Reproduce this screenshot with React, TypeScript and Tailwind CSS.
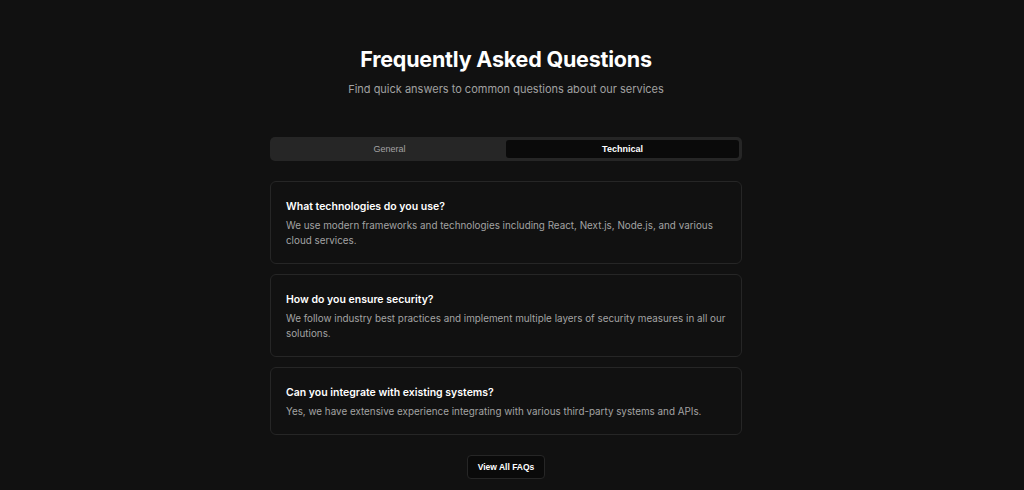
import { useState } from 'react';

const faqs = {
  general: [
    {
      q: 'What services do you offer?',
      a: 'We offer web development, mobile apps, design and consulting services for businesses of all sizes.',
    },
  ],
  technical: [
    {
      q: 'What technologies do you use?',
      a: 'We use modern frameworks and technologies including React, Next.js, Node.js, and various cloud services.',
    },
    {
      q: 'How do you ensure security?',
      a: 'We follow industry best practices and implement multiple layers of security measures in all our solutions.',
    },
    {
      q: 'Can you integrate with existing systems?',
      a: 'Yes, we have extensive experience integrating with various third-party systems and APIs.',
    },
  ],
};

export default function App() {
  const [tab, setTab] = useState<'general' | 'technical'>('technical');

  return (
    <div className="min-h-screen bg-[#111111] pr-[12px] text-white font-['Inter',sans-serif]">
      <section className="mx-auto w-[472px] pt-[45px] pb-[12px]">
        {/* Header */}
        <div className="text-center">
          <h1 className="text-[21.5px] leading-[28px] font-bold tracking-[-0.2px]">Frequently Asked Questions</h1>
          <p className="mt-[8px] text-[11px] leading-[16px] text-[#a1a1a1]">
            Find quick answers to common questions about our services
          </p>
        </div>

        {/* Tabs */}
        <div className="mt-[40px] grid grid-cols-2 rounded-[5px] bg-[#262626] p-[3px] font-['Liberation_Sans',Arial,sans-serif] text-[9px]">
          <button
            onClick={() => setTab('general')}
            className={
              tab === 'general'
                ? 'h-[18px] rounded-[3px] bg-[#0a0a0a] pt-[1px] font-bold text-white'
                : 'h-[18px] rounded-[3px] pt-[1px] text-[#a3a3a3]'
            }
          >
            General
          </button>
          <button
            onClick={() => setTab('technical')}
            className={
              tab === 'technical'
                ? 'h-[18px] rounded-[3px] bg-[#0a0a0a] pt-[1px] font-bold text-white'
                : 'h-[18px] rounded-[3px] pt-[1px] text-[#a3a3a3]'
            }
          >
            Technical
          </button>
        </div>

        {/* Questions */}
        <div className="mt-[20px] flex flex-col gap-[10px]">
          {faqs[tab].map((item) => (
            <div key={item.q} className="rounded-[6px] border border-[#262626] bg-[#111111] px-[15px] pt-[17.5px] pb-[15px]">
              <h3 className="text-[10.5px] leading-[14px] font-semibold text-white">{item.q}</h3>
              <p className="mt-[4.5px] text-[9.85px] leading-[15px] text-[#a3a3a3]">{item.a}</p>
            </div>
          ))}
        </div>

        {/* Footer */}
        <div className="mt-[20px] flex justify-center">
          <button className="h-[24px] rounded-[4px] border border-[#262626] bg-[#0a0a0a] px-[10px] pt-[1px] font-['Liberation_Sans',Arial,sans-serif] text-[8.5px] font-bold text-white">
            View All FAQs
          </button>
        </div>
      </section>
    </div>
  );
}
